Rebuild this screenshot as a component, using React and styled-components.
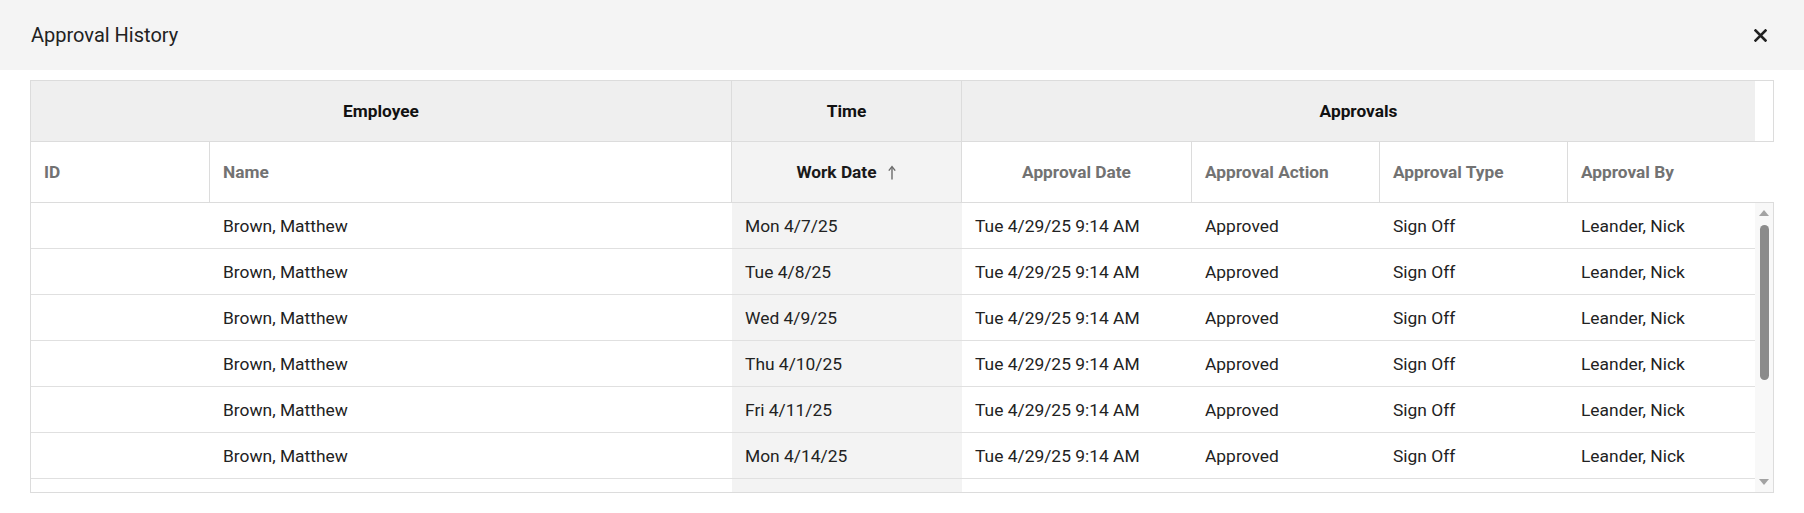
import React from "react"
import styled, { createGlobalStyle } from "styled-components"

const GlobalStyle = createGlobalStyle`
	body {
		margin: 0;
		background: #ffffff;
		font-family: Roboto, "Liberation Sans", sans-serif;
		color: #212121;
	}
`

const COLUMNS = "179px 522px 230px 230px 188px 188px 187px"

const Dialog = styled.div`
	width: 1804px;
	height: 513px;
	background: #ffffff;
	overflow: hidden;
`

const Header = styled.div`
	height: 70px;
	background: #f4f4f4;
	display: flex;
	align-items: center;
	justify-content: space-between;
	padding: 0 37px 0 31px;
	box-sizing: border-box;
`

const Title = styled.div`
	font-size: 20px;
	color: #222222;
`

const CloseButton = styled.button`
	border: none;
	background: none;
	padding: 0;
	width: 13px;
	height: 13px;
	display: flex;
	cursor: pointer;
`

const Content = styled.div`
	padding: 10px 0 0 30px;
`

const Table = styled.div`
	width: 1744px;
	border: 1px solid #dcdcdc;
	box-sizing: border-box;
`

const GroupRow = styled.div`
	display: grid;
	grid-template-columns: 701px 230px 793px 18px;
	height: 61px;
	border-bottom: 1px solid #dcdcdc;
	box-sizing: border-box;
`

const GroupCell = styled.div`
	display: flex;
	align-items: center;
	justify-content: center;
	background: ${p => (p.$blank ? "#ffffff" : "#efefef")};
	border-right: ${p => (p.$divider ? "1px solid #dcdcdc" : "none")};
	font-size: 17.3px;
	font-weight: 700;
	color: #111111;
`

const HeadRow = styled.div`
	display: grid;
	grid-template-columns: ${COLUMNS} 18px;
	height: 61px;
	border-bottom: 1px solid #dcdcdc;
	box-sizing: border-box;
`

const HeadCell = styled.div`
	display: flex;
	align-items: center;
	justify-content: ${p => (p.$center ? "center" : "flex-start")};
	padding: 0 13px;
	background: ${p => (p.$sorted ? "#f3f3f3" : "#ffffff")};
	border-right: ${p => (p.$divider ? "1px solid #dcdcdc" : "none")};
	font-size: 17.3px;
	font-weight: 700;
	color: ${p => (p.$sorted ? "#1a1a1a" : "#727272")};
	gap: 10px;
`

const Body = styled.div`
	display: flex;
	height: 289px;
`

const Rows = styled.div`
	flex: 1;
	overflow: hidden;
`

const Row = styled.div`
	display: grid;
	grid-template-columns: ${COLUMNS};
	height: 46px;
	border-bottom: 1px solid #e0e0e0;
	box-sizing: border-box;
`

const Cell = styled.div`
	display: flex;
	align-items: center;
	padding: 0 13px;
	background: ${p => (p.$sorted ? "#f3f3f3" : "#ffffff")};
	font-size: 17.4px;
	color: #222222;
	white-space: nowrap;
`

const Scrollbar = styled.div`
	width: 18px;
	display: flex;
	flex-direction: column;
	background: #f8f8f8;
`

const ArrowButton = styled.div`
	height: 20px;
	display: flex;
	align-items: center;
	justify-content: center;

	&::after {
		content: "";
		width: 0;
		height: 0;
		border-left: 5px solid transparent;
		border-right: 5px solid transparent;
		${p => (p.$down ? "border-top: 6px solid #a3a3a3;" : "border-bottom: 6px solid #a3a3a3;")}
	}
`

const Track = styled.div`
	flex: 1;
	display: flex;
	justify-content: center;
	padding-top: 2px;
`

const Thumb = styled.div`
	width: 9px;
	height: 155px;
	border-radius: 5px;
	background: #8b8b8b;
`

const columns = [
	{ label: "ID" },
	{ label: "Name" },
	{ label: "Work Date", center: true, sorted: true },
	{ label: "Approval Date", center: true },
	{ label: "Approval Action" },
	{ label: "Approval Type" },
	{ label: "Approval By" },
]

const workDates = ["Mon 4/7/25", "Tue 4/8/25", "Wed 4/9/25", "Thu 4/10/25", "Fri 4/11/25", "Mon 4/14/25"]

const rows = workDates.map(date => ({
	id: "",
	name: "Brown, Matthew",
	workDate: date,
	approvalDate: "Tue 4/29/25 9:14 AM",
	action: "Approved",
	type: "Sign Off",
	by: "Leander, Nick",
}))

const SortArrow = () => (
	<svg width="10" height="15" viewBox="0 0 10 15" fill="none">
		<path d="M5 14.5V2" stroke="#6a6a6a" strokeWidth="1.4" />
		<path d="M1.8 5.6L5 1.6l3.2 4" stroke="#6a6a6a" strokeWidth="1.4" strokeLinejoin="miter" />
	</svg>
)

const CloseIcon = () => (
	<svg width="13" height="13" viewBox="0 0 13 13">
		<path d="M1.5 1.5l10 10M11.5 1.5l-10 10" stroke="#222222" strokeWidth="2.6" strokeLinecap="square" />
	</svg>
)

export default function App() {
	return (
		<Dialog>
			<GlobalStyle />
			<Header>
				<Title>Approval History</Title>
				<CloseButton aria-label="Close">
					<CloseIcon />
				</CloseButton>
			</Header>
			<Content>
				<Table>
					<GroupRow>
						<GroupCell $divider>Employee</GroupCell>
						<GroupCell $divider>Time</GroupCell>
						<GroupCell>Approvals</GroupCell>
						<GroupCell $blank />
					</GroupRow>
					<HeadRow>
						{columns.map((col, i) => (
							<HeadCell key={col.label} $center={col.center} $sorted={col.sorted} $divider={i < columns.length - 1}>
								{col.label}
								{col.sorted && <SortArrow />}
							</HeadCell>
						))}
						<HeadCell />
					</HeadRow>
					<Body>
						<Rows>
							{rows.map(r => (
								<Row key={r.workDate}>
									<Cell>{r.id}</Cell>
									<Cell>{r.name}</Cell>
									<Cell $sorted>{r.workDate}</Cell>
									<Cell>{r.approvalDate}</Cell>
									<Cell>{r.action}</Cell>
									<Cell>{r.type}</Cell>
									<Cell>{r.by}</Cell>
								</Row>
							))}
							<Row>
								<Cell />
								<Cell />
								<Cell $sorted />
								<Cell />
								<Cell />
								<Cell />
								<Cell />
							</Row>
						</Rows>
						<Scrollbar>
							<ArrowButton />
							<Track>
								<Thumb />
							</Track>
							<ArrowButton $down />
						</Scrollbar>
					</Body>
				</Table>
			</Content>
		</Dialog>
	)
}
